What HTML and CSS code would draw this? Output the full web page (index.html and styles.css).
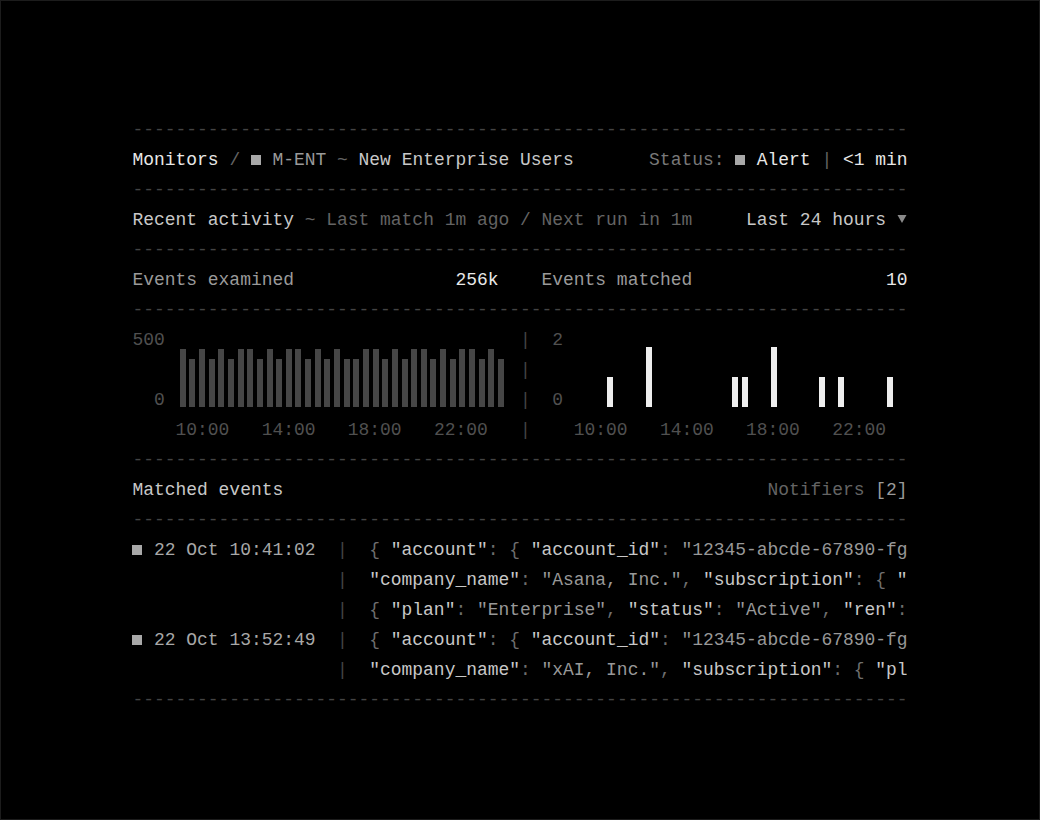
FILE: index.html
```html
<!DOCTYPE html>
<html lang="en">
<head>
<meta charset="utf-8">
<title>Monitors / M-ENT</title>
<link rel="stylesheet" href="styles.css">
</head>
<body>
<div class="frame">
  <main class="panel">
    <div class="rule">------------------------------------------------------------------------</div>

    <div class="row">
      <div><span class="hi">Monitors</span> <span class="dim">/</span> <span class="sq"></span> <span class="mid">M-ENT</span> <span class="dim">~</span> <span class="lt">New Enterprise Users</span></div>
      <div><span class="dim2">Status:</span> <span class="sq"></span> <span class="hi">Alert</span> <span class="dim">|</span> <span class="hi">&lt;1 min</span></div>
    </div>

    <div class="rule">------------------------------------------------------------------------</div>

    <div class="row">
      <div><span class="lt">Recent activity</span> <span class="dim">~ Last match 1m ago / Next run in 1m</span></div>
      <div><span class="lt">Last 24 hours</span> <span class="caret"><svg viewBox="0 0 10 8" width="10" height="8"><polygon points="0.5,0 9.5,0 5,8" fill="#8a8a8a"/></svg></span></div>
    </div>

    <div class="rule">------------------------------------------------------------------------</div>

    <div class="stats">
      <div class="stat"><span class="mid">Events examined</span><span class="hi">256k</span></div>
      <div class="stat"><span class="mid">Events matched</span><span class="hi">10</span></div>
    </div>

    <div class="rule">------------------------------------------------------------------------</div>

    <div class="charts">
      <div class="chart left">
        <div class="yaxis"><span>500</span><span></span><span>0</span></div>
        <div class="plot">
          <i class="bar" style="height:58px"></i><i class="bar" style="height:48px"></i><i class="bar" style="height:58px"></i><i class="bar" style="height:48px"></i><i class="bar" style="height:58px"></i><i class="bar" style="height:48px"></i><i class="bar" style="height:58px"></i><i class="bar" style="height:58px"></i><i class="bar" style="height:48px"></i><i class="bar" style="height:58px"></i><i class="bar" style="height:48px"></i><i class="bar" style="height:58px"></i><i class="bar" style="height:58px"></i><i class="bar" style="height:48px"></i><i class="bar" style="height:58px"></i><i class="bar" style="height:48px"></i><i class="bar" style="height:58px"></i><i class="bar" style="height:48px"></i><i class="bar" style="height:48px"></i><i class="bar" style="height:58px"></i><i class="bar" style="height:58px"></i><i class="bar" style="height:48px"></i><i class="bar" style="height:58px"></i><i class="bar" style="height:48px"></i><i class="bar" style="height:58px"></i><i class="bar" style="height:58px"></i><i class="bar" style="height:48px"></i><i class="bar" style="height:58px"></i><i class="bar" style="height:48px"></i><i class="bar" style="height:58px"></i><i class="bar" style="height:58px"></i><i class="bar" style="height:48px"></i><i class="bar" style="height:58px"></i><i class="bar" style="height:48px"></i>
        </div>
        <div class="xaxis">    10:00   14:00   18:00   22:00</div>
      </div>
      <div class="sep"><span>|</span><span>|</span><span>|</span><span>|</span></div>
      <div class="chart right">
        <div class="yaxis"><span>2</span><span></span><span>0</span></div>
        <div class="plot">
          <i class="bar"></i><i class="bar"></i><i class="bar"></i><i class="bar" style="height:30px"></i><i class="bar"></i><i class="bar"></i><i class="bar"></i><i class="bar" style="height:60px"></i><i class="bar"></i><i class="bar"></i><i class="bar"></i><i class="bar"></i><i class="bar"></i><i class="bar"></i><i class="bar"></i><i class="bar"></i><i class="bar" style="height:30px"></i><i class="bar" style="height:30px"></i><i class="bar"></i><i class="bar"></i><i class="bar" style="height:60px"></i><i class="bar"></i><i class="bar"></i><i class="bar"></i><i class="bar"></i><i class="bar" style="height:30px"></i><i class="bar"></i><i class="bar" style="height:30px"></i><i class="bar"></i><i class="bar"></i><i class="bar"></i><i class="bar"></i><i class="bar" style="height:30px"></i><i class="bar"></i>
        </div>
        <div class="xaxis">    10:00   14:00   18:00   22:00</div>
      </div>
    </div>

    <div class="rule">------------------------------------------------------------------------</div>

    <div class="row">
      <div class="lt">Matched events</div>
      <div><span class="dim">Notifiers</span> <span class="mid">[2]</span></div>
    </div>

    <div class="rule">------------------------------------------------------------------------</div>

    <div class="events">
      <div class="event">
        <div class="when"><span class="sq"></span> 22 Oct 10:41:02</div>
        <div class="pipes"><span>|</span><span>|</span><span>|</span></div>
        <div class="payload">
          <div class="line"><span class="p">{ </span><span class="k">"account"</span><span class="p">: { </span><span class="k">"account_id"</span><span class="p">: </span><span class="v">"12345-abcde-67890-fg</span></div>
          <div class="line"><span class="k">"company_name"</span><span class="p">: </span><span class="v">"Asana, Inc."</span><span class="p">, </span><span class="k">"subscription"</span><span class="p">: { </span><span class="k">"</span></div>
          <div class="line"><span class="p">{ </span><span class="k">"plan"</span><span class="p">: </span><span class="v">"Enterprise"</span><span class="p">, </span><span class="k">"status"</span><span class="p">: </span><span class="v">"Active"</span><span class="p">, </span><span class="k">"ren"</span><span class="p">:</span></div>
        </div>
      </div>
      <div class="event">
        <div class="when"><span class="sq"></span> 22 Oct 13:52:49</div>
        <div class="pipes"><span>|</span><span>|</span></div>
        <div class="payload">
          <div class="line"><span class="p">{ </span><span class="k">"account"</span><span class="p">: { </span><span class="k">"account_id"</span><span class="p">: </span><span class="v">"12345-abcde-67890-fg</span></div>
          <div class="line"><span class="k">"company_name"</span><span class="p">: </span><span class="v">"xAI, Inc."</span><span class="p">, </span><span class="k">"subscription"</span><span class="p">: { </span><span class="k">"pl</span></div>
        </div>
      </div>
    </div>

    <div class="rule">------------------------------------------------------------------------</div>
  </main>
</div>
</body>
</html>
```

FILE: styles.css
```css
* { box-sizing: border-box; }

html, body {
  margin: 0;
  padding: 0;
  background: #000;
}

body {
  font-family: "Liberation Mono", "DejaVu Sans Mono", monospace;
  font-size: 17.96px;
  line-height: 30px;
  color: #c8c8c8;
}

.frame {
  width: 1040px;
  height: 820px;
  border: 1px solid #1c1c1c;
  overflow: hidden;
}

.panel {
  width: 72ch;
  margin: 114px auto 0;
}

.hi { color: #e8e8e8; }
.lt { color: #c8c8c8; }
.mid { color: #9a9a9a; }
.dim { color: #646464; }
.dim2 { color: #787878; }

.rule {
  color: #444444;
  white-space: nowrap;
  height: 30px;
}

.row {
  display: flex;
  justify-content: space-between;
  height: 30px;
  white-space: pre;
}

.sq {
  display: inline-block;
  width: 9.7px;
  height: 9.6px;
  margin-right: 1.1px;
  background: #a8a8a8;
  vertical-align: baseline;
}

.caret {
  display: inline-block;
  width: 1ch;
  text-align: center;
}
.caret svg {
  display: inline-block;
  vertical-align: baseline;
  margin-bottom: 2px;
}

.stats {
  display: grid;
  grid-template-columns: 34ch 34ch;
  column-gap: 4ch;
  height: 30px;
}
.stat {
  display: flex;
  justify-content: space-between;
}

.charts {
  display: flex;
  height: 120px;
}

.chart {
  display: grid;
  grid-template-columns: 3ch 1fr;
  grid-template-rows: 90px 30px;
}
.chart.left { width: 36ch; }
.chart.right { flex: 1; }

.yaxis {
  display: flex;
  flex-direction: column;
  text-align: right;
  color: #505050;
}
.yaxis span { height: 30px; }

.plot {
  display: flex;
  align-items: flex-end;
  gap: 3.65px;
  padding-left: 15px;
  padding-bottom: 8.3px;
}

.bar {
  display: block;
  width: 6px;
  height: 0;
  flex: none;
}
.left .bar { background: #464646; }
.right .bar { background: #eeeeee; }

.xaxis {
  grid-column: 1 / -1;
  white-space: pre;
  color: #505050;
}

.sep {
  width: 1ch;
  display: flex;
  flex-direction: column;
  color: #444444;
}
.sep span { height: 30px; }

.event {
  display: grid;
  grid-template-columns: 19ch 3ch 50ch;
}

.when {
  color: #a8a8a8;
  white-space: pre;
}

.pipes {
  display: flex;
  flex-direction: column;
  color: #444444;
}
.pipes span { height: 30px; }

.payload .line {
  height: 30px;
  white-space: pre;
  overflow: hidden;
}
.p { color: #6e6e6e; }
.k { color: #c8c8c8; }
.v { color: #989898; }
```
